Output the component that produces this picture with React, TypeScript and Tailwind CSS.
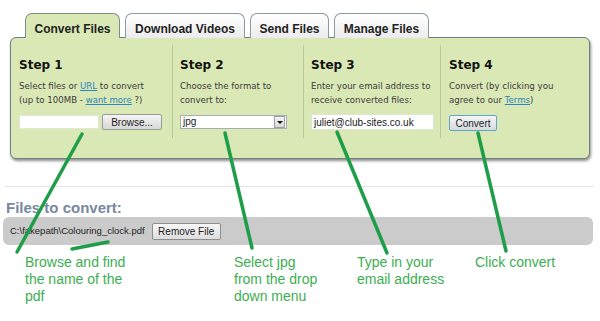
import { useState } from "react";

const tabs = [
  { label: "Convert Files", width: "w-[95px]", active: true },
  { label: "Download Videos", width: "w-[120px]", active: false },
  { label: "Send Files", width: "w-[79px]", active: false },
  { label: "Manage Files", width: "w-[95px]", active: false },
];

const notes = [
  { width: "w-[209px]", lines: ["Browse and find", "the name of the", "pdf"] },
  { width: "w-[123px]", lines: ["Select jpg", "from the drop", "down menu"] },
  { width: "w-[118px]", lines: ["Type in your", "email address"] },
  { width: "w-[110px]", lines: ["Click convert"] },
];

function Pointers() {
  // green arrows drawn over the screenshot
  return (
    <svg
      className="absolute inset-0 pointer-events-none"
      width="600"
      height="321"
      viewBox="0 0 600 321"
    >
      <g stroke="#1f9e49" strokeWidth="3.5" strokeLinecap="round">
        <line x1="82" y1="134" x2="17" y2="252" />
        <line x1="72" y1="249" x2="108" y2="242" />
        <line x1="225" y1="133" x2="252" y2="248" />
        <line x1="337" y1="132" x2="387" y2="253" />
        <line x1="478" y1="133" x2="506" y2="251" />
      </g>
    </svg>
  );
}

export default function App() {
  const [format] = useState("jpg");

  return (
    <div className="relative w-[600px] h-[321px] overflow-hidden bg-white font-['Liberation_Sans',Arial,sans-serif]">
      {/* Tabs */}
      <div className="flex gap-[5px] pl-[25px] pt-[13px] relative z-10">
        {tabs.map((tab) => (
          <div
            key={tab.label}
            className={`${tab.width} h-[25px] -mb-px rounded-t-[7px] border border-b-0 flex items-center justify-center pt-[5px] text-[12px] font-bold text-[#222] ${
              tab.active
                ? "bg-[#d9e8b4] border-[#7d8c8f]"
                : "bg-gradient-to-b from-white to-[#ececec] border-[#8b99a3] h-[24px] border-b"
            }`}
          >
            {tab.label}
          </div>
        ))}
      </div>

      {/* Panel */}
      <div className="mx-[10px] w-[580px] h-[122px] bg-[#dae8b5] border border-[#6f7f82] rounded-[6px] shadow-[1px_2px_3px_rgba(0,0,0,0.45)] flex font-['DejaVu_Sans',Verdana,sans-serif] text-[#3a3a3a]">
        <div className="w-[161px] mt-[7px] h-[93px] pl-[8px] pt-[12px]">
          <h2 className="text-[12px] leading-[16px] font-bold text-[#111]">Step 1</h2>
          <p className="mt-[6px] text-[8.6px] leading-[14px]">
            Select files or <span className="text-[#2b86bf] underline">URL</span> to convert
            <br />
            (up to 100MB - <span className="text-[#2b86bf] underline">want more</span> ?)
          </p>
          <div className="mt-[7px] flex items-center gap-[3px]">
            <div className="w-[80px] h-[14px] bg-white border border-[#e2e8d5]" />
            <div className="w-[60px] h-[16px] rounded-[2px] border border-[#9a9a9a] bg-gradient-to-b from-[#f4f4f4] to-[#d8d8d8] flex items-center justify-center text-[10px] text-[#222] font-['Liberation_Sans',Arial,sans-serif]">
              Browse...
            </div>
          </div>
        </div>

        <div className="w-[131px] mt-[7px] h-[93px] border-l border-[#b9c79a] pl-[7px] pt-[12px]">
          <h2 className="text-[12px] leading-[16px] font-bold text-[#111]">Step 2</h2>
          <p className="mt-[6px] text-[8.6px] leading-[14px]">
            Choose the format to
            <br />
            convert to:
          </p>
          <div className="mt-[8px] w-[107px] h-[14px] bg-white border border-[#a7adb2] flex items-center justify-between font-['Liberation_Sans',Arial,sans-serif]">
            <span className="pl-[2px] text-[10px] text-[#222] leading-none">{format}</span>
            <span className="w-[11px] h-[12px] mr-px border border-[#9aa0a6] bg-gradient-to-b from-[#f6f6f6] to-[#d9d9d9] flex items-center justify-center">
              <span className="w-0 h-0 border-l-[3px] border-r-[3px] border-t-[3px] border-l-transparent border-r-transparent border-t-[#111]" />
            </span>
          </div>
        </div>

        <div className="w-[137px] mt-[7px] h-[93px] border-l border-[#b9c79a] pl-[7px] pt-[12px]">
          <h2 className="text-[12px] leading-[16px] font-bold text-[#111]">Step 3</h2>
          <p className="mt-[6px] text-[8.6px] leading-[14px]">
            Enter your email address to
            <br />
            receive converted files:
          </p>
          <div className="mt-[7px] w-[123px] h-[16px] bg-white border border-[#dfe5d2] flex items-center pl-[2px] text-[10px] text-[#222] font-['Liberation_Sans',Arial,sans-serif]">
            juliet@club-sites.co.uk
          </div>
        </div>

        <div className="flex-1 mt-[7px] h-[93px] border-l border-[#b9c79a] pl-[8px] pt-[12px]">
          <h2 className="text-[12px] leading-[16px] font-bold text-[#111]">Step 4</h2>
          <p className="mt-[6px] text-[8.6px] leading-[14px]">
            Convert (by clicking you
            <br />
            agree to our <span className="text-[#2b86bf] underline">Terms</span>)
          </p>
          <div className="mt-[8px] w-[48px] h-[16px] rounded-[2px] border border-[#5fa7c9] bg-gradient-to-b from-[#f4f6f8] to-[#d6dbe0] flex items-center justify-center text-[10px] text-[#222] font-['Liberation_Sans',Arial,sans-serif]">
            Convert
          </div>
        </div>
      </div>

      {/* Files list */}
      <div className="mt-[27px] mx-[5px] w-[588px] border-t border-[#e3e3e3]" />
      <h3 className="mt-[12px] pl-[6px] text-[15px] leading-[17px] font-bold text-[#7888a0]">
        Files to convert:
      </h3>
      <div className="mt-[1px] ml-[3px] w-[590px] h-[28px] rounded-[6px] bg-[#cbcbcb] flex items-center pl-[7px] gap-[7px]">
        <span className="text-[9.5px] text-[#222]">C:\fakepath\Colouring_clock.pdf</span>
        <span className="w-[69px] h-[17px] rounded-[2px] border border-[#8e8e8e] bg-gradient-to-b from-[#f7f7f7] to-[#dedede] flex items-center justify-center text-[10px] text-[#222]">
          Remove File
        </span>
      </div>

      {/* Notes */}
      <div className="flex pl-[25px] mt-[9px] text-[14px] leading-[17px] text-[#3cae52]">
        {notes.map((note) => (
          <div key={note.lines[0]} className={note.width}>
            {note.lines.map((line) => (
              <div key={line}>{line}</div>
            ))}
          </div>
        ))}
      </div>

      <Pointers />
    </div>
  );
}
